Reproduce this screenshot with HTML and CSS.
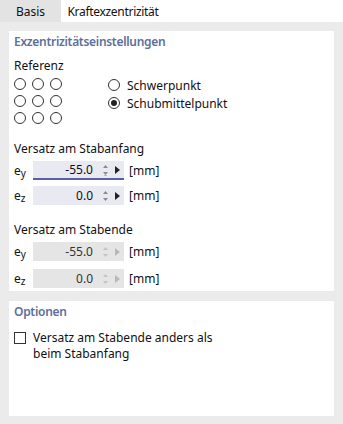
FILE: index.html
```html
<!DOCTYPE html>
<html lang="de">
<head>
  <meta charset="UTF-8" />
  <title>Kraftexzentrizität</title>
  <link rel="stylesheet" href="styles.css">
</head>
<body>
  <div class="tabs">
    <div class="tab">Basis</div>
    <div class="tab active">Kraftexzentrizität</div>
  </div>

  <div class="content">
    <div class="panel panel-main">
      <div class="panel-title">Exzentrizitätseinstellungen</div>

      <div class="label">Referenz</div>
      <div class="ref-row">
        <div class="ref-grid">
          <span class="radio"></span><span class="radio"></span><span class="radio"></span>
          <span class="radio"></span><span class="radio"></span><span class="radio"></span>
          <span class="radio"></span><span class="radio"></span><span class="radio"></span>
        </div>
        <div class="ref-options">
          <div class="option"><span class="radio"></span>Schwerpunkt</div>
          <div class="option"><span class="radio checked"></span>Schubmittelpunkt</div>
        </div>
      </div>

      <div class="label group">Versatz am Stabanfang</div>
      <div class="field">
        <span class="sym">e<sub>y</sub></span>
        <div class="box focus">
          <span class="value">-55.0</span>
          <svg class="spin" width="7" height="12" viewBox="0 0 7 12"><path d="M3.5 1 L6 4 L1 4 Z M1 8 L6 8 L3.5 11 Z" fill="#8a8a8a"/><rect x="2" y="11.2" width="3" height="0.8" fill="#b0b0b0"/></svg>
          <svg class="arrow" width="5" height="8" viewBox="0 0 5 8"><path d="M0 0 L5 4 L0 8 Z" fill="#222"/></svg>
        </div>
        <span class="unit">[mm]</span>
      </div>
      <div class="field">
        <span class="sym">e<sub>z</sub></span>
        <div class="box">
          <span class="value">0.0</span>
          <svg class="spin" width="7" height="12" viewBox="0 0 7 12"><path d="M3.5 1 L6 4 L1 4 Z M1 8 L6 8 L3.5 11 Z" fill="#8a8a8a"/></svg>
          <svg class="arrow" width="5" height="8" viewBox="0 0 5 8"><path d="M0 0 L5 4 L0 8 Z" fill="#222"/></svg>
        </div>
        <span class="unit">[mm]</span>
      </div>

      <div class="label group">Versatz am Stabende</div>
      <div class="field">
        <span class="sym">e<sub>y</sub></span>
        <div class="box disabled">
          <span class="value">-55.0</span>
          <svg class="spin" width="7" height="12" viewBox="0 0 7 12"><path d="M3.5 1 L6 4 L1 4 Z M1 8 L6 8 L3.5 11 Z" fill="#c4c4c4"/></svg>
          <svg class="arrow" width="5" height="8" viewBox="0 0 5 8"><path d="M0 0 L5 4 L0 8 Z" fill="#b8b8b8"/></svg>
        </div>
        <span class="unit">[mm]</span>
      </div>
      <div class="field last">
        <span class="sym">e<sub>z</sub></span>
        <div class="box disabled">
          <span class="value">0.0</span>
          <svg class="spin" width="7" height="12" viewBox="0 0 7 12"><path d="M3.5 1 L6 4 L1 4 Z M1 8 L6 8 L3.5 11 Z" fill="#c4c4c4"/></svg>
          <svg class="arrow" width="5" height="8" viewBox="0 0 5 8"><path d="M0 0 L5 4 L0 8 Z" fill="#b8b8b8"/></svg>
        </div>
        <span class="unit">[mm]</span>
      </div>
    </div>

    <div class="panel panel-options">
      <div class="panel-title">Optionen</div>
      <div class="check-row">
        <span class="checkbox"></span>
        <span class="check-text">Versatz am Stabende anders als<br>beim Stabanfang</span>
      </div>
    </div>
  </div>
</body>
</html>
```

FILE: styles.css
```css
body {
  margin: 0;
  background: #ebebeb;
  font-family: "Noto Sans", "Liberation Sans", sans-serif;
  font-size: 12px;
  color: #111;
}

.tabs {
  display: flex;
  height: 22px;
  background: #fff;
}

.tab {
  display: flex;
  align-items: center;
  justify-content: center;
  width: 61px;
  background: #e3e3e3;
}

.tab.active {
  width: 104px;
  background: #fff;
  letter-spacing: -0.3px;
}

.content {
  display: flex;
  flex-direction: column;
  gap: 10px;
  padding: 9px 9px 8px;
}

.panel {
  background: #fff;
  padding: 2px 5px 0;
}

.panel-main {
  height: 258px;
}

.panel-options {
  height: 113px;
}

.panel-title {
  color: #5d6f9c;
  font-weight: 600;
  letter-spacing: -0.3px;
  height: 18px;
  line-height: 18px;
}

.label {
  height: 16px;
  line-height: 16px;
  margin-top: 7px;
}

.label.group {
  margin-top: 17px;
}

.ref-row {
  display: flex;
  gap: 46px;
  margin-top: 4px;
}

.ref-grid {
  display: grid;
  grid-template-columns: repeat(3, 12px);
  gap: 5px 6px;
}

.radio {
  display: inline-flex;
  align-items: center;
  justify-content: center;
  box-sizing: border-box;
  width: 12px;
  height: 12px;
  border: 1px solid #333;
  border-radius: 50%;
}

.radio.checked::after {
  content: "";
  width: 6px;
  height: 6px;
  border-radius: 50%;
  background: #222;
}

.ref-options {
  display: flex;
  flex-direction: column;
  gap: 2px;
  margin-top: -1px;
}

.option {
  display: flex;
  align-items: center;
  gap: 7px;
  height: 16px;
}

.field {
  display: flex;
  align-items: center;
  height: 19px;
  margin-top: 6px;
}

.label + .field {
  margin-top: 4px;
}

.field.last {
  margin-top: 8px;
}

.sym {
  width: 19px;
}

.sym sub {
  font-size: 10px;
  vertical-align: -2px;
}

.box {
  display: flex;
  align-items: center;
  box-sizing: border-box;
  width: 91px;
  height: 19px;
  background: #e9e9f2;
}

.box.focus {
  border-bottom: 2px solid #5a5ea8;
}

.box.disabled {
  background: #e5e5e5;
}

.value {
  width: 60px;
  text-align: right;
}

.box.disabled .value {
  color: #333;
}

.spin {
  margin-left: 9px;
}

.arrow {
  margin-left: 6px;
}

.unit {
  margin-left: 5px;
}

.check-row {
  display: flex;
  gap: 7px;
  margin-top: 9px;
}

.checkbox {
  flex: none;
  box-sizing: border-box;
  width: 12px;
  height: 12px;
  margin-top: 2px;
  border: 1px solid #333;
}

.check-text {
  line-height: 16px;
}
```
